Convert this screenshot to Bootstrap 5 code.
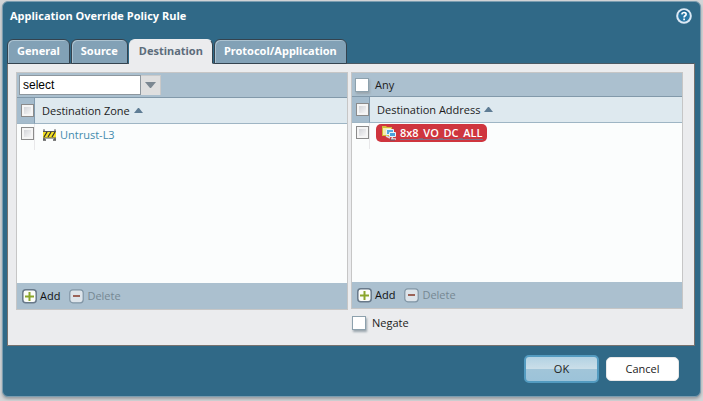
<!DOCTYPE html>
<html lang="en">
<head>
<meta charset="utf-8">
<meta name="viewport" content="width=device-width, initial-scale=1">
<title>Application Override Policy Rule</title>
<link href="https://cdn.jsdelivr.net/npm/bootstrap@5.3.0/dist/css/bootstrap.min.css" rel="stylesheet">
<style>
body{background:#d3d5d7;font:11px/16px "Open Sans","Noto Sans",sans-serif;color:#1c1c1c;padding:1px 2px 5px}
.dialog{background:#306987;border:1px solid #7b9db0;border-radius:6px;box-shadow:0 2px 3px #9a9da0;padding:0 5px 0 4px}
.dialog-title{padding:6px 3px 0;height:37px}
.dialog-title h1{font:700 11px/16px "Open Sans",sans-serif;color:#fff;margin:0}
.help{width:16px;height:16px;border:0;padding:0;background:none;line-height:0}
.tabs{gap:1px;flex-wrap:nowrap;border:0;margin-bottom:-1px;position:relative}
.tabs .nav-link{font:700 11px/16px "Noto Sans",sans-serif;color:#fff;background:#82a1b6;border:1px solid #34434f;border-radius:6px 6px 0 0;padding:3px 9px 5px;margin:0;height:25px;box-shadow:inset 1px 1px 0 #abc2d0}
.tabs .nav-link.active{color:#5d6d7c;background:#ebecee;border-color:#ebecee #34434f #ebecee #ebecee;box-shadow:none}
.sheet{background:#ebecee;border:1px solid #77726f;border-top-color:#4c5a64;padding:8px 11px 0 8px;min-height:283px}
.panels{gap:3px}
.half{flex:1 1 0;min-width:0}
.panel{border:1px solid #c6c6c6;background:#fbfdfd}
.bar{background:#abc0cf;height:25px;border-bottom:1px solid #8299aa}
.bar.slim{height:24px}
.bar.slim .box{margin-left:3px}
.combo{width:142px;height:20px;margin-left:2px;border:0;border-radius:0;padding:0 22px 0 4px;font:12px/20px "Liberation Sans",Arial,sans-serif;color:#000;appearance:none;background:
 url("data:image/svg+xml,%3Csvg xmlns='http://www.w3.org/2000/svg' width='20' height='20'%3E%3Crect width='20' height='20' fill='%23c9c9c9'/%3E%3Crect width='19' height='19' y='1' fill='%23dfdfdf'/%3E%3Cpath d='M4 7h11l-5 6h-1z' fill='%237b8791'/%3E%3C/svg%3E") right top no-repeat,
 linear-gradient(#fff,#fff) 1px 1px/calc(100% - 22px) calc(100% - 2px) no-repeat #8e979e}
.grid-box{min-height:185px}
.grid{width:100%;margin:0;border-collapse:separate;border-spacing:0}
.grid th{background:#dee9ef;height:26px;padding:0 0 0 7px;font-weight:400;border-bottom:1px solid #9eb5c4;vertical-align:middle}
.grid th:first-child{width:18px;background:#a5bccd;border-right:1px solid #829cb0;padding:0 0 0 4px}
.grid td{height:26px;padding:0 0 0 7px;vertical-align:top}
.grid td:first-child{padding:3px 0 0 4px;border-right:1px solid #e8e8ea}
.sort{font:inherit;color:inherit;border:0;background:none;padding:0;gap:4px}
.tick{appearance:none;display:block;width:13px;height:13px;margin:0;border:1px solid #8b8b8b;background:linear-gradient(135deg,#c9cbd0,#fff);box-shadow:inset 0 0 0 2px #f5f5f5}
.tick:checked{background:#306987}
.box{appearance:none;width:14px;height:14px;margin:0;border:1px solid #8da1ad;background:#fff;box-shadow:1px 2px 2px #9aa6ad}
.box:checked{background:#306987}
.entry{color:#438bad;text-decoration:none;gap:3px;padding-top:3px}
.chip{font-weight:600;background:#cf353e;color:#fff;border-radius:5px;height:18px;padding:0 4px 0 5px;margin:1px 0 0 -1px;text-decoration:none;gap:3px}
.chip:hover{color:#fff}
.chip-name{line-height:12px;border-bottom:1px solid #7d7088}
.chip-name span{color:#7d7088}
.foot{background:#abc0cf;height:26px;padding-left:5px;gap:9px}
.tool{border:0;background:none;padding:0;font:inherit;color:#111;gap:3px}
.tool:disabled{color:#768893}
.actions{gap:7px;padding:9px 16px 13px}
.action{font:inherit;width:73px;height:24px;border:1px solid #e8e8e8;border-radius:5px;background:#fff;color:#222;padding:0}
.action.ok{width:75px;height:28px;border:2px solid #539bc0;background:linear-gradient(#b2d2e3,#cadee8 48%,#a1c5d9 52%,#9cc3d9)}
.box-label{padding-left:6px}
.negate{padding:6px 0 0 1px}
</style>
<script src="https://cdn.jsdelivr.net/npm/bootstrap@5.3.0/dist/js/bootstrap.bundle.min.js"></script>
</head>
<body>
<svg class="d-none">
<symbol id="plus" viewBox="0 0 15 15"><rect x=".8" y=".8" width="13.4" height="13" rx="3" fill="#fbfcf8" stroke="#68798a" stroke-width="1.5"/><path d="M7.500 3v9M3 7.500h9" stroke="#8aa52b" stroke-width="2"/></symbol>
<symbol id="minus" viewBox="0 0 15 15"><rect x=".8" y=".8" width="13.4" height="13" rx="3" fill="#dde4ea" stroke="#8095a5" stroke-width="1.200"/><path d="M4 7h7" stroke="#9b6358" stroke-width="2"/></symbol>
<symbol id="up" viewBox="0 0 9 5"><path d="M0 5 4 0h1l4 5z" fill="#5e7c94"/></symbol>
</svg>
<main class="dialog">
<header class="dialog-title d-flex justify-content-between">
<h1>Application Override Policy Rule</h1>
<button class="help" aria-label="Help"><svg width="16" height="16" viewBox="0 0 16 16"><circle cx="8" cy="8" r="7.800" fill="#dce9f5"/><circle cx="8" cy="8" r="5.800" fill="#2877a5"/><path d="M3.300 5.500a5.300 5.300 0 0 1 9.400 0" fill="none" stroke="#17567f" stroke-width="1"/><path d="M5.800 6.300c.3-2.500 4.500-2.300 4.300.1 0 1.500-2 1.300-2 3M8.100 10.500v1.700" fill="none" stroke="#fff" stroke-width="1.700"/></svg></button>
</header>
<ul class="nav nav-tabs tabs" role="tablist">
<li class="nav-item"><button class="nav-link" role="tab">General</button></li>
<li class="nav-item"><button class="nav-link" role="tab">Source</button></li>
<li class="nav-item"><button class="nav-link active" role="tab" aria-selected="true">Destination</button></li>
<li class="nav-item"><button class="nav-link" role="tab">Protocol/Application</button></li>
</ul>
<div class="sheet">
<div class="panels d-flex align-items-start">
<div class="half">
<section class="panel">
<div class="bar d-flex align-items-center"><select class="combo" aria-label="Destination zone mode"><option>select</option><option>any</option></select></div>
<div class="grid-box"><table class="grid">
<thead><tr><th><input type="checkbox" class="tick" aria-label="Select all zones"></th><th><button class="sort d-flex align-items-center">Destination Zone <svg width="9" height="5"><use href="#up"/></svg></button></th></tr></thead>
<tbody><tr><td><input type="checkbox" class="tick" aria-label="Select Untrust-L3"></td><td><a href="#" class="entry d-inline-flex align-items-center"><svg width="15" height="12" viewBox="0 0 15 12"><path d="M2 1v10M13 1v10M1 11h3M11 11h3" stroke="#555" stroke-width="1.300"/><rect x="1" y="2" width="13" height="7" fill="#f3df24"/><path d="M1 2.500h13M1 9h13" stroke="#555"/><path d="m2 8 3-5m1 5 3-5m1 5 3-5" stroke="#343434" stroke-width="1.300"/><path d="M1 1h2m9 0h2" stroke="#999" stroke-width="1.500"/></svg>Untrust-L3</a></td></tr></tbody>
</table></div>
<div class="foot d-flex align-items-center"><button class="tool d-flex align-items-center"><svg width="15" height="15"><use href="#plus"/></svg>Add</button><button class="tool d-flex align-items-center" disabled><svg width="15" height="15"><use href="#minus"/></svg>Delete</button></div>
</section>
</div>
<div class="half">
<section class="panel">
<div class="bar slim d-flex align-items-center"><input type="checkbox" class="box" id="any"><label for="any" class="box-label">Any</label></div>
<div class="grid-box"><table class="grid">
<thead><tr><th><input type="checkbox" class="tick" aria-label="Select all addresses"></th><th><button class="sort d-flex align-items-center">Destination Address <svg width="9" height="5"><use href="#up"/></svg></button></th></tr></thead>
<tbody><tr><td><input type="checkbox" class="tick" aria-label="Select 8x8_VO_DC_ALL"></td><td><a href="#" class="chip d-inline-flex align-items-center"><svg width="16" height="16" viewBox="0 0 16 16"><path d="M1 1h4l1 1h5v9H1z" fill="#d2bd39"/><path d="M2 3h8v7H2z" fill="#f5edac"/><path d="M5.500 4.500h7v5h-7z" fill="#57a9df" stroke="#e9f5fc"/><path d="M8.500 7.500h6v4h-6z" fill="#4b9fdb" stroke="#e9f5fc"/><path d="m5 11 4 2m2-1 1 2m-2 0h5" stroke="#dbdde0" stroke-width="1.500"/><path d="M9 15h5" stroke="#595b70"/></svg><span class="chip-name">8x8<span>_</span>VO<span>_</span>DC<span>_</span>ALL</span></a></td></tr></tbody>
</table></div>
<div class="foot d-flex align-items-center"><button class="tool d-flex align-items-center"><svg width="15" height="15"><use href="#plus"/></svg>Add</button><button class="tool d-flex align-items-center" disabled><svg width="15" height="15"><use href="#minus"/></svg>Delete</button></div>
</section>
<div class="negate d-flex align-items-center"><input type="checkbox" class="box" id="negate"><label for="negate" class="box-label">Negate</label></div>
</div>
</div>
</div>
<footer class="actions d-flex justify-content-end align-items-center"><button class="action ok">OK</button><button class="action">Cancel</button></footer>
</main>
</body>
</html>
